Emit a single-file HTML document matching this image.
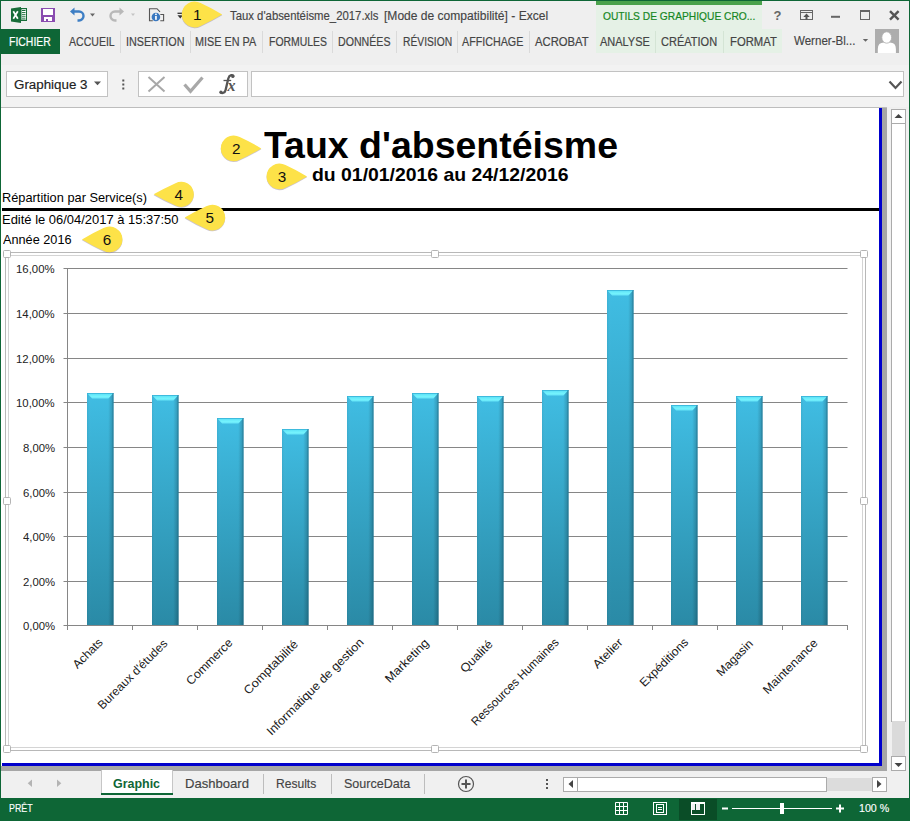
<!DOCTYPE html>
<html><head><meta charset="utf-8">
<style>
html,body{margin:0;padding:0;}
body{width:910px;height:821px;overflow:hidden;position:relative;background:#efefef;font-family:"Liberation Sans", sans-serif;}
.abs{position:absolute;}
.t{position:absolute;white-space:pre;line-height:1;transform-origin:0 0;}
.sep{position:absolute;width:1px;background:#dadada;}
</style></head><body>
<!-- window border -->
<div class="abs" style="left:0;top:0;width:910px;height:1px;background:#0e6636"></div>
<div class="abs" style="left:0;top:0;width:1px;height:821px;background:#0e6636"></div>
<div class="abs" style="left:909px;top:0;width:1px;height:821px;background:#0e6636"></div>

<!-- contextual tab bg -->
<div class="abs" style="left:596px;top:1px;width:166px;height:28px;background:#e5f1e6"></div>
<div class="abs" style="left:596px;top:1px;width:166px;height:4px;background:#4aa24c"></div>
<div class="abs" style="left:596px;top:29px;width:186px;height:24px;background:#e5f1e6"></div>

<!-- FICHIER -->
<div class="abs" style="left:0;top:29px;width:60px;height:25px;background:#0e6636"></div>
<div class="sep" style="left:120px;top:31px;height:22px"></div>
<div class="sep" style="left:190px;top:31px;height:22px"></div>
<div class="sep" style="left:262px;top:31px;height:22px"></div>
<div class="sep" style="left:332px;top:31px;height:22px"></div>
<div class="sep" style="left:396px;top:31px;height:22px"></div>
<div class="sep" style="left:457px;top:31px;height:22px"></div>
<div class="sep" style="left:529px;top:31px;height:22px"></div>
<div class="sep" style="left:655px;top:31px;height:22px;background:#d4e4d5"></div>
<div class="sep" style="left:723px;top:31px;height:22px;background:#d4e4d5"></div>

<!-- title bar icons -->
<svg class="abs" style="left:0;top:0" width="910" height="60">
  <!-- excel icon -->
  <path d="M11,8.5 L21,7 L21,23 L11,21.5 Z" fill="#176d38"/>
  <rect x="20.5" y="8" width="6.5" height="13" fill="#176d38"/>
  <rect x="21.5" y="9.2" width="4.5" height="10.6" fill="#fff"/>
  <path d="M22,10.5h3.5M22,12.6h3.5M22,14.7h3.5M22,16.8h3.5M22,18.9h3.5" stroke="#176d38" stroke-width="1"/>
  <path d="M13.3,11.2 L17.8,18.8 M17.8,11.2 L13.3,18.8" stroke="#fff" stroke-width="1.7"/>
  <!-- save icon -->
  <rect x="41" y="8" width="14" height="14" fill="#8a4cb0"/>
  <rect x="43" y="9" width="10" height="6" fill="#fff"/>
  <rect x="44" y="17" width="8" height="4" fill="#fff"/>
  <rect x="46" y="19" width="2" height="2" fill="#8a4cb0"/>
  <!-- undo -->
  <path d="M72.5,11.5 h6.5 a4.5,4.5 0 0 1 0,9 h-1.5" fill="none" stroke="#3d7ec4" stroke-width="2.4"/>
  <path d="M70,11.5 L74.5,7.5 L74.5,15.5 Z" fill="#3d7ec4"/>
  <path d="M90,13.5 h5 l-2.5,3 z" fill="#666"/>
  <!-- redo -->
  <path d="M121.5,11.5 h-6.5 a4.5,4.5 0 0 0 0,9 h1.5" fill="none" stroke="#b8b8b8" stroke-width="2.4"/>
  <path d="M124,11.5 L119.5,7.5 L119.5,15.5 Z" fill="#b8b8b8"/>
  <path d="M131,13.5 h4 l-2,2.5 z" fill="#c4c4c4"/>
  <!-- doc info icon -->
  <path d="M152.8,20.7 H149.5 V8.7 H157 L160,11.8" fill="none" stroke="#555" stroke-width="1.1"/>
  <path d="M160.3,14.5 H163.6 V20.7 H160.3" fill="none" stroke="#555" stroke-width="1.1"/>
  <circle cx="155.9" cy="17" r="4.3" fill="#3a78c0"/>
  <rect x="155.1" y="13.6" width="1.7" height="1.5" fill="#fff"/>
  <rect x="155.1" y="16" width="1.7" height="3.8" fill="#fff"/>
  <!-- customize qat -->
  <path d="M177.5,13.3 h5" stroke="#333" stroke-width="1.3"/>
  <path d="M177.5,15.2 h5.5 l-2.75,3.3 z" fill="#333"/>
  <!-- help -->
  <text x="777.5" y="20" text-anchor="middle" font-size="13" font-weight="bold" fill="#666" font-family="Liberation Sans">?</text>
  <!-- ribbon display options -->
  <rect x="800.5" y="10.5" width="12" height="9" fill="none" stroke="#666" stroke-width="1"/>
  <path d="M800.5,12.5 h12" stroke="#666" stroke-width="1"/>
  <path d="M806.5,19.5 v-4" stroke="#555" stroke-width="2"/><path d="M803.3,17 L806.5,13.6 L809.7,17 Z" fill="#555"/>
  <!-- minimize -->
  <rect x="831" y="15.8" width="9" height="2" fill="#666"/>
  <!-- maximize -->
  <rect x="860.5" y="10.5" width="9" height="9" fill="none" stroke="#666" stroke-width="1"/>
  <rect x="860" y="10" width="10" height="2" fill="#666"/>
  <!-- close -->
  <path d="M890,11.2 L898.6,19.6 M898.6,11.2 L890,19.6" stroke="#555" stroke-width="2.4"/>
  <!-- user dropdown & avatar -->
  <path d="M862.8,39 h5.4 l-2.7,2.8 z" fill="#666"/>
  <rect x="875" y="29" width="24" height="24" fill="#adadad"/>
  <path d="M877.8,53 V49 Q877.8,42.6 884,42.6 H889.7 Q895.9,42.6 895.9,49 V53 Z" fill="#fff"/>
  <ellipse cx="886.7" cy="37.5" rx="4.9" ry="5.7" fill="#fff" stroke="#adadad" stroke-width="0.8"/>
</svg>

<!-- formula bar -->
<div class="abs" style="left:1px;top:65px;width:908px;height:42px;background:#f2f2f2"></div>
<div class="abs" style="left:6px;top:71px;width:100px;height:24px;background:#fff;border:1px solid #c2c2c2"></div>
<div class="abs" style="left:138px;top:71px;width:108px;height:24px;background:#fff;border:1px solid #c2c2c2"></div>
<div class="abs" style="left:251px;top:71px;width:651px;height:24px;background:#fff;border:1px solid #c2c2c2"></div>
<svg class="abs" style="left:0;top:60px" width="910" height="45">
  <path d="M94,21.5 h7 l-3.5,3.8 z" fill="#555"/>
  <rect x="122.3" y="19.5" width="2" height="2" fill="#555"/>
  <rect x="122.3" y="23.5" width="2" height="2" fill="#555"/>
  <rect x="122.3" y="27.5" width="2" height="2" fill="#555"/>
  <path d="M148.5,17 L164.5,31.5 M164.5,17 L148.5,31.5" stroke="#a8a8a8" stroke-width="2"/>
  <path d="M184.5,24.5 L190.5,31.3 L202.5,17.5" fill="none" stroke="#a8a8a8" stroke-width="3.2"/>
  <path d="M233.6,16.6 C233.2,14.3 229.4,14.6 228.3,18.5 L225.6,30 C224.9,33 222.2,33.6 220.6,32.4" fill="none" stroke="#555" stroke-width="2.3"/>
  <circle cx="232.8" cy="16.4" r="1.6" fill="#555"/><circle cx="220.9" cy="32.2" r="1.6" fill="#555"/>
  <path d="M223.5,20.5 H231.2" stroke="#555" stroke-width="1.3"/>
  <text x="227.6" y="30.7" font-size="16" font-style="italic" font-weight="bold" fill="#555" font-family="Liberation Serif">x</text>
  <path d="M889.5,21.5 L895.5,28 L901.5,21.5" fill="none" stroke="#555" stroke-width="2.2"/>
</svg>

<!-- sheet -->
<div class="abs" style="left:1px;top:107px;width:886px;height:1px;background:#bdbdbd"></div>
<div class="abs" style="left:1px;top:108px;width:886px;height:663px;background:#a6a6a6"></div>
<div class="abs" style="left:1px;top:108px;width:881px;height:658px;background:#0000cc"></div>
<div class="abs" style="left:1px;top:108px;width:878px;height:655px;background:#fff"></div>
<div class="abs" style="left:1px;top:763px;width:1px;height:3px;background:#fff"></div>
<!-- black rule -->
<div class="abs" style="left:2px;top:208px;width:877px;height:3px;background:#000"></div>

<!-- chart frame -->
<div class="abs" style="left:5px;top:252px;width:859px;height:497px;border:1px solid #b8b8b8"></div>
<div class="abs" style="left:8px;top:255px;width:853px;height:491px;border:1px solid #d4d4d4"></div>

<div class="abs" style="left:3px;top:250px;width:8px;height:8px;box-sizing:border-box;border:1px solid #b4b4b4;background:#fff;border-radius:1.5px"></div>
<div class="abs" style="left:860px;top:250px;width:8px;height:8px;box-sizing:border-box;border:1px solid #b4b4b4;background:#fff;border-radius:1.5px"></div>
<div class="abs" style="left:3px;top:745px;width:8px;height:8px;box-sizing:border-box;border:1px solid #b4b4b4;background:#fff;border-radius:1.5px"></div>
<div class="abs" style="left:860px;top:745px;width:8px;height:8px;box-sizing:border-box;border:1px solid #b4b4b4;background:#fff;border-radius:1.5px"></div>
<div class="abs" style="left:431px;top:250px;width:8px;height:8px;box-sizing:border-box;border:1px solid #b4b4b4;background:#fff;border-radius:1.5px"></div>
<div class="abs" style="left:431px;top:745px;width:8px;height:8px;box-sizing:border-box;border:1px solid #b4b4b4;background:#fff;border-radius:1.5px"></div>
<div class="abs" style="left:3px;top:497px;width:8px;height:8px;box-sizing:border-box;border:1px solid #b4b4b4;background:#fff;border-radius:1.5px"></div>
<div class="abs" style="left:860px;top:497px;width:8px;height:8px;box-sizing:border-box;border:1px solid #b4b4b4;background:#fff;border-radius:1.5px"></div>
<svg class="abs" style="left:0;top:0" width="910" height="821"><defs><linearGradient id="bg" x1="0" y1="0" x2="0" y2="1" gradientUnits="objectBoundingBox"><stop offset="0" stop-color="#40bde3"/><stop offset="1" stop-color="#2a8aa6"/></linearGradient><linearGradient id="bh" x1="0" y1="0" x2="1" y2="0"><stop offset="0" stop-color="#000" stop-opacity="0.06"/><stop offset="0.15" stop-color="#fff" stop-opacity="0.0"/><stop offset="0.8" stop-color="#000" stop-opacity="0.0"/><stop offset="1" stop-color="#000" stop-opacity="0.22"/></linearGradient><linearGradient id="bt" x1="0" y1="0" x2="0" y2="1"><stop offset="0" stop-color="#55dcf5"/><stop offset="0.6" stop-color="#74f3fd"/><stop offset="1" stop-color="#66e4f8"/></linearGradient></defs><line x1="63.5" y1="625.5" x2="847.5" y2="625.5" stroke="#868686" stroke-width="1"/><line x1="63.5" y1="581.5" x2="847.5" y2="581.5" stroke="#868686" stroke-width="1"/><line x1="63.5" y1="536.5" x2="847.5" y2="536.5" stroke="#868686" stroke-width="1"/><line x1="63.5" y1="492.5" x2="847.5" y2="492.5" stroke="#868686" stroke-width="1"/><line x1="63.5" y1="447.5" x2="847.5" y2="447.5" stroke="#868686" stroke-width="1"/><line x1="63.5" y1="402.5" x2="847.5" y2="402.5" stroke="#868686" stroke-width="1"/><line x1="63.5" y1="358.5" x2="847.5" y2="358.5" stroke="#868686" stroke-width="1"/><line x1="63.5" y1="313.5" x2="847.5" y2="313.5" stroke="#868686" stroke-width="1"/><line x1="63.5" y1="268.5" x2="847.5" y2="268.5" stroke="#868686" stroke-width="1"/><line x1="67.5" y1="268" x2="67.5" y2="630" stroke="#868686" stroke-width="1"/><line x1="67.5" y1="625" x2="67.5" y2="630" stroke="#868686" stroke-width="1"/><line x1="132.5" y1="625" x2="132.5" y2="630" stroke="#868686" stroke-width="1"/><line x1="197.5" y1="625" x2="197.5" y2="630" stroke="#868686" stroke-width="1"/><line x1="262.5" y1="625" x2="262.5" y2="630" stroke="#868686" stroke-width="1"/><line x1="327.5" y1="625" x2="327.5" y2="630" stroke="#868686" stroke-width="1"/><line x1="392.5" y1="625" x2="392.5" y2="630" stroke="#868686" stroke-width="1"/><line x1="457.5" y1="625" x2="457.5" y2="630" stroke="#868686" stroke-width="1"/><line x1="522.5" y1="625" x2="522.5" y2="630" stroke="#868686" stroke-width="1"/><line x1="587.5" y1="625" x2="587.5" y2="630" stroke="#868686" stroke-width="1"/><line x1="652.5" y1="625" x2="652.5" y2="630" stroke="#868686" stroke-width="1"/><line x1="717.5" y1="625" x2="717.5" y2="630" stroke="#868686" stroke-width="1"/><line x1="782.5" y1="625" x2="782.5" y2="630" stroke="#868686" stroke-width="1"/><line x1="847.5" y1="625" x2="847.5" y2="630" stroke="#868686" stroke-width="1"/><rect x="87" y="393.00" width="26.5" height="232.00" fill="url(#bg)"/><rect x="87" y="393.00" width="26.5" height="232.00" fill="url(#bh)"/><path d="M87,393.00 h26.5 l-5.1,5.6 h-16.30 Z" fill="url(#bt)"/><rect x="87" y="393.00" width="26.5" height="0.8" fill="#2fa6cf" opacity="0.8"/><rect x="112.5" y="393.00" width="1" height="232.00" fill="#1d6f8a" opacity="0.55"/><rect x="152" y="395.00" width="26.5" height="230.00" fill="url(#bg)"/><rect x="152" y="395.00" width="26.5" height="230.00" fill="url(#bh)"/><path d="M152,395.00 h26.5 l-5.1,5.6 h-16.30 Z" fill="url(#bt)"/><rect x="152" y="395.00" width="26.5" height="0.8" fill="#2fa6cf" opacity="0.8"/><rect x="177.5" y="395.00" width="1" height="230.00" fill="#1d6f8a" opacity="0.55"/><rect x="217" y="418.00" width="26.5" height="207.00" fill="url(#bg)"/><rect x="217" y="418.00" width="26.5" height="207.00" fill="url(#bh)"/><path d="M217,418.00 h26.5 l-5.1,5.6 h-16.30 Z" fill="url(#bt)"/><rect x="217" y="418.00" width="26.5" height="0.8" fill="#2fa6cf" opacity="0.8"/><rect x="242.5" y="418.00" width="1" height="207.00" fill="#1d6f8a" opacity="0.55"/><rect x="282" y="429.00" width="26.5" height="196.00" fill="url(#bg)"/><rect x="282" y="429.00" width="26.5" height="196.00" fill="url(#bh)"/><path d="M282,429.00 h26.5 l-5.1,5.6 h-16.30 Z" fill="url(#bt)"/><rect x="282" y="429.00" width="26.5" height="0.8" fill="#2fa6cf" opacity="0.8"/><rect x="307.5" y="429.00" width="1" height="196.00" fill="#1d6f8a" opacity="0.55"/><rect x="347" y="396.00" width="26.5" height="229.00" fill="url(#bg)"/><rect x="347" y="396.00" width="26.5" height="229.00" fill="url(#bh)"/><path d="M347,396.00 h26.5 l-5.1,5.6 h-16.30 Z" fill="url(#bt)"/><rect x="347" y="396.00" width="26.5" height="0.8" fill="#2fa6cf" opacity="0.8"/><rect x="372.5" y="396.00" width="1" height="229.00" fill="#1d6f8a" opacity="0.55"/><rect x="412" y="393.00" width="26.5" height="232.00" fill="url(#bg)"/><rect x="412" y="393.00" width="26.5" height="232.00" fill="url(#bh)"/><path d="M412,393.00 h26.5 l-5.1,5.6 h-16.30 Z" fill="url(#bt)"/><rect x="412" y="393.00" width="26.5" height="0.8" fill="#2fa6cf" opacity="0.8"/><rect x="437.5" y="393.00" width="1" height="232.00" fill="#1d6f8a" opacity="0.55"/><rect x="477" y="396.00" width="26.5" height="229.00" fill="url(#bg)"/><rect x="477" y="396.00" width="26.5" height="229.00" fill="url(#bh)"/><path d="M477,396.00 h26.5 l-5.1,5.6 h-16.30 Z" fill="url(#bt)"/><rect x="477" y="396.00" width="26.5" height="0.8" fill="#2fa6cf" opacity="0.8"/><rect x="502.5" y="396.00" width="1" height="229.00" fill="#1d6f8a" opacity="0.55"/><rect x="542" y="390.00" width="26.5" height="235.00" fill="url(#bg)"/><rect x="542" y="390.00" width="26.5" height="235.00" fill="url(#bh)"/><path d="M542,390.00 h26.5 l-5.1,5.6 h-16.30 Z" fill="url(#bt)"/><rect x="542" y="390.00" width="26.5" height="0.8" fill="#2fa6cf" opacity="0.8"/><rect x="567.5" y="390.00" width="1" height="235.00" fill="#1d6f8a" opacity="0.55"/><rect x="607" y="290.00" width="26.5" height="335.00" fill="url(#bg)"/><rect x="607" y="290.00" width="26.5" height="335.00" fill="url(#bh)"/><path d="M607,290.00 h26.5 l-5.1,5.6 h-16.30 Z" fill="url(#bt)"/><rect x="607" y="290.00" width="26.5" height="0.8" fill="#2fa6cf" opacity="0.8"/><rect x="632.5" y="290.00" width="1" height="335.00" fill="#1d6f8a" opacity="0.55"/><rect x="671" y="405.00" width="26.5" height="220.00" fill="url(#bg)"/><rect x="671" y="405.00" width="26.5" height="220.00" fill="url(#bh)"/><path d="M671,405.00 h26.5 l-5.1,5.6 h-16.30 Z" fill="url(#bt)"/><rect x="671" y="405.00" width="26.5" height="0.8" fill="#2fa6cf" opacity="0.8"/><rect x="696.5" y="405.00" width="1" height="220.00" fill="#1d6f8a" opacity="0.55"/><rect x="736" y="396.00" width="26.5" height="229.00" fill="url(#bg)"/><rect x="736" y="396.00" width="26.5" height="229.00" fill="url(#bh)"/><path d="M736,396.00 h26.5 l-5.1,5.6 h-16.30 Z" fill="url(#bt)"/><rect x="736" y="396.00" width="26.5" height="0.8" fill="#2fa6cf" opacity="0.8"/><rect x="761.5" y="396.00" width="1" height="229.00" fill="#1d6f8a" opacity="0.55"/><rect x="801" y="396.00" width="26.5" height="229.00" fill="url(#bg)"/><rect x="801" y="396.00" width="26.5" height="229.00" fill="url(#bh)"/><path d="M801,396.00 h26.5 l-5.1,5.6 h-16.30 Z" fill="url(#bt)"/><rect x="801" y="396.00" width="26.5" height="0.8" fill="#2fa6cf" opacity="0.8"/><rect x="826.5" y="396.00" width="1" height="229.00" fill="#1d6f8a" opacity="0.55"/><text transform="translate(103.50,643.20) rotate(-45) scale(1.0,1)" text-anchor="end" font-size="12" fill="#1a1a1a" font-family="Liberation Sans">Achats</text><text transform="translate(168.30,644.20) rotate(-45) scale(1.0,1)" text-anchor="end" font-size="12" fill="#1a1a1a" font-family="Liberation Sans">Bureaux d'études</text><text transform="translate(233.40,643.50) rotate(-45) scale(1.02,1)" text-anchor="end" font-size="12" fill="#1a1a1a" font-family="Liberation Sans">Commerce</text><text transform="translate(298.70,645.00) rotate(-45) scale(1.065,1)" text-anchor="end" font-size="12" fill="#1a1a1a" font-family="Liberation Sans">Comptabilité</text><text transform="translate(364.50,643.00) rotate(-45) scale(1.05,1)" text-anchor="end" font-size="12" fill="#1a1a1a" font-family="Liberation Sans">Informatique de gestion</text><text transform="translate(429.50,643.70) rotate(-45) scale(1.07,1)" text-anchor="end" font-size="12" fill="#1a1a1a" font-family="Liberation Sans">Marketing</text><text transform="translate(493.60,645.00) rotate(-45) scale(1.06,1)" text-anchor="end" font-size="12" fill="#1a1a1a" font-family="Liberation Sans">Qualité</text><text transform="translate(559.60,643.00) rotate(-45) scale(0.98,1)" text-anchor="end" font-size="12" fill="#1a1a1a" font-family="Liberation Sans">Ressources Humaines</text><text transform="translate(623.50,643.20) rotate(-45) scale(1.08,1)" text-anchor="end" font-size="12" fill="#1a1a1a" font-family="Liberation Sans">Atelier</text><text transform="translate(689.00,643.00) rotate(-45) scale(1.015,1)" text-anchor="end" font-size="12" fill="#1a1a1a" font-family="Liberation Sans">Expéditions</text><text transform="translate(753.80,644.40) rotate(-45) scale(1.015,1)" text-anchor="end" font-size="12" fill="#1a1a1a" font-family="Liberation Sans">Magasin</text><text transform="translate(818.40,643.90) rotate(-45) scale(1.045,1)" text-anchor="end" font-size="12" fill="#1a1a1a" font-family="Liberation Sans">Maintenance</text></svg>

<!-- vertical scrollbar -->
<div class="abs" style="left:887px;top:108px;width:22px;height:663px;background:#f0f0f0"></div>
<div class="abs" style="left:891px;top:109px;width:13px;height:13px;background:#fff;border:1px solid #ababab"></div>
<div class="abs" style="left:891px;top:123px;width:13px;height:597px;background:#fff;border:1px solid #ababab"></div>
<div class="abs" style="left:892px;top:721px;width:13px;height:35px;background:#dadada"></div>
<div class="abs" style="left:891px;top:756px;width:13px;height:13px;background:#fff;border:1px solid #ababab"></div>
<svg class="abs" style="left:887px;top:108px" width="22" height="663">
  <path d="M7.5,10 h8 l-4,-4 z" fill="#444"/>
  <path d="M7.5,655 h8 l-4,4 z" fill="#444"/>
</svg>

<!-- sheet tab bar -->
<div class="abs" style="left:1px;top:771px;width:908px;height:27px;background:#f0f0f0"></div>
<div class="abs" style="left:101px;top:770px;width:70px;height:23px;background:#fff;border-left:1px solid #c6c6c6;border-right:1px solid #c6c6c6"></div>
<div class="abs" style="left:101px;top:793px;width:72px;height:2px;background:#0e6636"></div>
<div class="sep" style="left:263px;top:774px;height:20px;background:#bdbdbd"></div>
<div class="sep" style="left:331px;top:774px;height:20px;background:#bdbdbd"></div>
<div class="sep" style="left:424px;top:774px;height:20px;background:#bdbdbd"></div>
<svg class="abs" style="left:0;top:770px" width="910" height="28">
  <path d="M32,9.5 v7.5 l-4.3,-3.75 z" fill="#b4b4b4"/>
  <path d="M57,9.5 v7.5 l4.3,-3.75 z" fill="#b4b4b4"/>
  <circle cx="466" cy="14" r="7.5" fill="none" stroke="#555" stroke-width="1.2"/>
  <path d="M466,9.5 v9 M461.5,14 h9" stroke="#555" stroke-width="2"/>
  <rect x="546" y="9" width="2" height="2" fill="#555"/>
  <rect x="546" y="13" width="2" height="2" fill="#555"/>
  <rect x="546" y="17" width="2" height="2" fill="#555"/>
</svg>
<!-- horizontal scrollbar -->
<div class="abs" style="left:563px;top:778px;width:323px;height:13px;background:#dcdcdc"></div>
<div class="abs" style="left:563px;top:777px;width:15px;height:15px;background:#fff;border:1px solid #ababab;box-sizing:border-box"></div>
<div class="abs" style="left:577px;top:777px;width:250px;height:15px;background:#fff;border:1px solid #ababab;box-sizing:border-box"></div>
<div class="abs" style="left:872px;top:777px;width:15px;height:15px;background:#fff;border:1px solid #ababab;box-sizing:border-box"></div>
<svg class="abs" style="left:0;top:770px" width="910" height="28">
  <path d="M573,10 v8 l-4.5,-4 z" fill="#444"/>
  <path d="M877,10 v8 l4.5,-4 z" fill="#444"/>
</svg>

<!-- status bar -->
<div class="abs" style="left:0;top:798px;width:910px;height:23px;background:#0e6636"></div>
<div class="abs" style="left:679px;top:799px;width:38px;height:21px;background:#0a4d27"></div>
<svg class="abs" style="left:0;top:798px" width="910" height="23">
  <!-- normal view grid -->
  <path d="M615.5,4.5 h12 v12 h-12 z M615.5,8.5 h12 M615.5,12.5 h12 M619.5,4.5 v12 M623.5,4.5 v12" fill="none" stroke="#fff" stroke-width="1"/>
  <!-- page layout -->
  <rect x="653.5" y="4.5" width="13" height="12" fill="none" stroke="#fff" stroke-width="1"/>
  <rect x="656.5" y="6.5" width="7" height="8" fill="none" stroke="#fff" stroke-width="1"/>
  <path d="M658,9.5 h4 M658,11.5 h4" stroke="#fff" stroke-width="1"/>
  <!-- page break -->
  <rect x="691.5" y="4.5" width="13" height="12" fill="none" stroke="#fff" stroke-width="1"/>
  <rect x="692" y="5" width="3" height="7" fill="#f0f0f0"/>
  <rect x="696" y="5" width="4" height="7" fill="#f0f0f0"/>
  <rect x="692" y="5" width="12" height="1" fill="#fff"/>
  <!-- zoom slider -->
  <rect x="722" y="9.5" width="6" height="2" fill="#fff"/>
  <rect x="732" y="10" width="100" height="1" fill="#fff"/>
  <rect x="780" y="5" width="4" height="11" fill="#fff"/>
  <path d="M836,10.5 h8 M840,6.5 v8" stroke="#fff" stroke-width="2"/>
</svg>

<div class="t" style="left:229.90px;top:9.62px;font-size:12.5px;font-weight:normal;color:#444;transform:scaleX(0.9071);-webkit-text-stroke:0.15px currentColor;">Taux d'absentéisme_2017.xls</div>
<div class="t" style="left:384.20px;top:9.62px;font-size:12.5px;font-weight:normal;color:#444;transform:scaleX(0.9641);-webkit-text-stroke:0.15px currentColor;">[Mode de compatibilité] - Excel</div>
<div class="t" style="left:602.50px;top:10.59px;font-size:11px;font-weight:normal;color:#16871f;transform:scaleX(0.9298);-webkit-text-stroke:0.2px #16871f;">OUTILS DE GRAPHIQUE CRO...</div>
<div class="t" style="left:9.20px;top:35.62px;font-size:12.5px;font-weight:normal;color:#fff;transform:scaleX(0.8360);-webkit-text-stroke:0.2px #fff;">FICHIER</div>
<div class="t" style="left:68.60px;top:35.62px;font-size:12.5px;font-weight:normal;color:#444444;transform:scaleX(0.8435);-webkit-text-stroke:0.2px #444444;">ACCUEIL</div>
<div class="t" style="left:125.70px;top:35.62px;font-size:12.5px;font-weight:normal;color:#444444;transform:scaleX(0.8624);-webkit-text-stroke:0.2px #444444;">INSERTION</div>
<div class="t" style="left:195.30px;top:35.62px;font-size:12.5px;font-weight:normal;color:#444444;transform:scaleX(0.8666);-webkit-text-stroke:0.2px #444444;">MISE EN PA</div>
<div class="t" style="left:268.60px;top:35.62px;font-size:12.5px;font-weight:normal;color:#444444;transform:scaleX(0.8351);-webkit-text-stroke:0.2px #444444;">FORMULES</div>
<div class="t" style="left:338.20px;top:35.62px;font-size:12.5px;font-weight:normal;color:#444444;transform:scaleX(0.8493);-webkit-text-stroke:0.2px #444444;">DONNÉES</div>
<div class="t" style="left:402.50px;top:35.62px;font-size:12.5px;font-weight:normal;color:#444444;transform:scaleX(0.8220);-webkit-text-stroke:0.2px #444444;">RÉVISION</div>
<div class="t" style="left:462.20px;top:35.62px;font-size:12.5px;font-weight:normal;color:#444444;transform:scaleX(0.8569);-webkit-text-stroke:0.2px #444444;">AFFICHAGE</div>
<div class="t" style="left:535.00px;top:35.62px;font-size:12.5px;font-weight:normal;color:#444444;transform:scaleX(0.9009);-webkit-text-stroke:0.2px #444444;">ACROBAT</div>
<div class="t" style="left:600.00px;top:35.62px;font-size:12.5px;font-weight:normal;color:#444444;transform:scaleX(0.8777);-webkit-text-stroke:0.2px #444444;">ANALYSE</div>
<div class="t" style="left:661.40px;top:35.62px;font-size:12.5px;font-weight:normal;color:#444444;transform:scaleX(0.8812);-webkit-text-stroke:0.2px #444444;">CRÉATION</div>
<div class="t" style="left:729.60px;top:35.62px;font-size:12.5px;font-weight:normal;color:#444444;transform:scaleX(0.9027);-webkit-text-stroke:0.2px #444444;">FORMAT</div>
<div class="t" style="left:793.80px;top:34.92px;font-size:12.5px;font-weight:normal;color:#444444;transform:scaleX(0.9240);-webkit-text-stroke:0.15px currentColor;">Werner-Bl...</div>
<div class="t" style="left:13.60px;top:79.14px;font-size:12px;font-weight:normal;color:#222;transform:scaleX(1.1128);-webkit-text-stroke:0.15px currentColor;">Graphique 3</div>
<div class="t" style="left:264.00px;top:126.56px;font-size:37.5px;font-weight:bold;color:#000;transform:scaleX(0.9995);">Taux d'absentéisme</div>
<div class="t" style="left:311.80px;top:165.76px;font-size:18.6px;font-weight:bold;color:#000;transform:scaleX(1.0426);">du 01/01/2016 au 24/12/2016</div>
<div class="t" style="left:2.20px;top:190.90px;font-size:13px;font-weight:normal;color:#000;transform:scaleX(0.9838);">Répartition par Service(s)</div>
<div class="t" style="left:2.00px;top:212.70px;font-size:13px;font-weight:normal;color:#000;transform:scaleX(0.9967);">Edité le 06/04/2017 à 15:37:50</div>
<div class="t" style="left:2.50px;top:232.70px;font-size:13px;font-weight:normal;color:#000;transform:scaleX(0.9769);">Année 2016</div>
<div class="t" style="left:113.00px;top:776.80px;font-size:13px;font-weight:bold;color:#0e6636;transform:scaleX(0.9568);">Graphic</div>
<div class="t" style="left:185.40px;top:777.20px;font-size:13px;font-weight:normal;color:#444;transform:scaleX(1.0063);-webkit-text-stroke:0.15px currentColor;">Dashboard</div>
<div class="t" style="left:276.00px;top:777.20px;font-size:13px;font-weight:normal;color:#444;transform:scaleX(0.9274);-webkit-text-stroke:0.15px currentColor;">Results</div>
<div class="t" style="left:343.80px;top:777.20px;font-size:13px;font-weight:normal;color:#444;transform:scaleX(0.9643);-webkit-text-stroke:0.15px currentColor;">SourceData</div>
<div class="t" style="left:8.50px;top:803.39px;font-size:11px;font-weight:normal;color:#fff;transform:scaleX(0.8079);-webkit-text-stroke:0.15px currentColor;">PRÊT</div>
<div class="t" style="left:858.60px;top:803.37px;font-size:11.5px;font-weight:normal;color:#fff;transform:scaleX(0.9262);-webkit-text-stroke:0.15px currentColor;">100 %</div>
<div class="t" style="left:22.60px;top:620.79px;font-size:11px;font-weight:normal;color:#222;transform:scaleX(1.0324);">0,00%</div>
<div class="t" style="left:22.60px;top:576.79px;font-size:11px;font-weight:normal;color:#222;transform:scaleX(1.0324);">2,00%</div>
<div class="t" style="left:22.60px;top:531.79px;font-size:11px;font-weight:normal;color:#222;transform:scaleX(1.0324);">4,00%</div>
<div class="t" style="left:22.60px;top:487.79px;font-size:11px;font-weight:normal;color:#222;transform:scaleX(1.0324);">6,00%</div>
<div class="t" style="left:22.60px;top:442.79px;font-size:11px;font-weight:normal;color:#222;transform:scaleX(1.0324);">8,00%</div>
<div class="t" style="left:16.20px;top:397.79px;font-size:11px;font-weight:normal;color:#222;transform:scaleX(1.0346);">10,00%</div>
<div class="t" style="left:16.20px;top:353.79px;font-size:11px;font-weight:normal;color:#222;transform:scaleX(1.0346);">12,00%</div>
<div class="t" style="left:16.20px;top:308.79px;font-size:11px;font-weight:normal;color:#222;transform:scaleX(1.0346);">14,00%</div>
<div class="t" style="left:16.20px;top:263.79px;font-size:11px;font-weight:normal;color:#222;transform:scaleX(1.0346);">16,00%</div>
<svg class="abs" style="left:0;top:0;z-index:5" width="910" height="821"><path d="M222.20,14.50 Q211.71,8.20 200.63,3.10 A12.9,12.9 0 1 0 200.63,25.90 Q211.71,20.80 222.20,14.50Z" transform="translate(0,0.8)" fill="#8a7a9a" opacity="0.45"/><path d="M222.20,14.50 Q211.71,8.20 200.63,3.10 A12.9,12.9 0 1 0 200.63,25.90 Q211.71,20.80 222.20,14.50Z" fill="#fde248"/><text x="197.20" y="20.00" text-anchor="middle" font-size="15.3" fill="#111" font-family="Liberation Sans">1</text><path d="M261.30,148.40 Q250.81,142.10 239.73,137.00 A12.9,12.9 0 1 0 239.73,159.80 Q250.81,154.70 261.30,148.40Z" transform="translate(0,0.8)" fill="#8a7a9a" opacity="0.45"/><path d="M261.30,148.40 Q250.81,142.10 239.73,137.00 A12.9,12.9 0 1 0 239.73,159.80 Q250.81,154.70 261.30,148.40Z" fill="#fde248"/><text x="236.30" y="153.90" text-anchor="middle" font-size="15.3" fill="#111" font-family="Liberation Sans">2</text><path d="M307.05,176.45 Q296.56,170.15 285.48,165.05 A12.9,12.9 0 1 0 285.48,187.85 Q296.56,182.75 307.05,176.45Z" transform="translate(0,0.8)" fill="#8a7a9a" opacity="0.45"/><path d="M307.05,176.45 Q296.56,170.15 285.48,165.05 A12.9,12.9 0 1 0 285.48,187.85 Q296.56,182.75 307.05,176.45Z" fill="#fde248"/><text x="282.05" y="181.95" text-anchor="middle" font-size="15.3" fill="#111" font-family="Liberation Sans">3</text><path d="M153.65,194.35 Q164.27,188.14 175.50,183.14 A12.6,12.6 0 1 1 175.50,205.56 Q164.27,200.56 153.65,194.35Z" transform="translate(0,0.8)" fill="#8a7a9a" opacity="0.45"/><path d="M153.65,194.35 Q164.27,188.14 175.50,183.14 A12.6,12.6 0 1 1 175.50,205.56 Q164.27,200.56 153.65,194.35Z" fill="#fde248"/><text x="178.65" y="199.85" text-anchor="middle" font-size="15.3" fill="#111" font-family="Liberation Sans">4</text><path d="M184.70,217.60 Q195.19,211.30 206.27,206.20 A12.9,12.9 0 1 1 206.27,229.00 Q195.19,223.90 184.70,217.60Z" transform="translate(0,0.8)" fill="#8a7a9a" opacity="0.45"/><path d="M184.70,217.60 Q195.19,211.30 206.27,206.20 A12.9,12.9 0 1 1 206.27,229.00 Q195.19,223.90 184.70,217.60Z" fill="#fde248"/><text x="209.70" y="223.10" text-anchor="middle" font-size="15.3" fill="#111" font-family="Liberation Sans">5</text><path d="M81.95,239.45 Q92.44,233.15 103.52,228.05 A12.9,12.9 0 1 1 103.52,250.85 Q92.44,245.75 81.95,239.45Z" transform="translate(0,0.8)" fill="#8a7a9a" opacity="0.45"/><path d="M81.95,239.45 Q92.44,233.15 103.52,228.05 A12.9,12.9 0 1 1 103.52,250.85 Q92.44,245.75 81.95,239.45Z" fill="#fde248"/><text x="106.95" y="244.95" text-anchor="middle" font-size="15.3" fill="#111" font-family="Liberation Sans">6</text></svg>
</body></html>
